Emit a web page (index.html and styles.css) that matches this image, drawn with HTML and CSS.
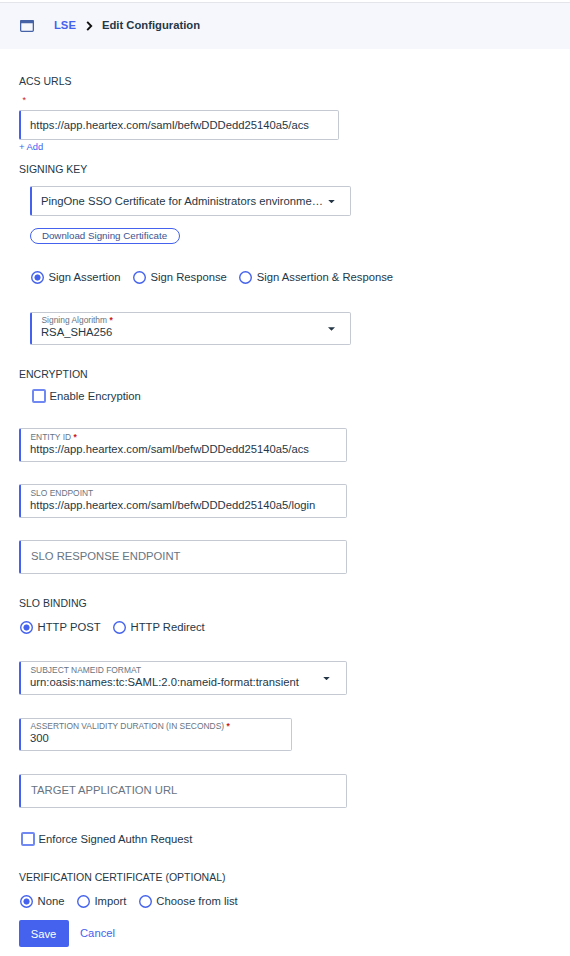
FILE: index.html
```html
<!DOCTYPE html>
<html lang="en">
<head>
<meta charset="utf-8">
<title>Edit Configuration</title>
<link rel="stylesheet" href="styles.css">
</head>
<body>
<header class="topbar">
  <svg class="app-icon" width="14" height="12" viewBox="0 0 14 12"><rect x=".65" y=".65" width="12.7" height="10.7" rx="1" fill="none" stroke="#4462a5" stroke-width="1.3"/><path d="M0 1.2Q0 0 1.2 0H12.8Q14 0 14 1.2V3.2H0Z" fill="#4462a5"/></svg>
  <a class="crumb-link">LSE</a>
  <svg class="chevron" width="7" height="10" viewBox="0 0 7 10"><path d="M1.2 .9L5.2 5L1.2 9.1" fill="none" stroke="#111" stroke-width="1.9"/></svg>
  <span class="crumb">Edit Configuration</span>
</header>
<main class="form">
  <h2 class="heading">ACS URLS</h2>
  <div class="required-mark">*</div>
  <div class="field field-url"><span class="value">https://app.heartex.com/saml/befwDDDedd25140a5/acs</span></div>
  <a class="add-link">+ Add</a>

  <h2 class="heading heading-key">SIGNING KEY</h2>
  <section class="indent">
    <div class="field field-select field-key"><span class="value">PingOne SSO Certificate for Administrators environme…</span><i class="caret"></i></div>
    <button class="download">Download Signing Certificate</button>
    <div class="radios radios-sign">
      <label class="option"><i class="radio on"></i><span>Sign Assertion</span></label>
      <label class="option"><i class="radio"></i><span>Sign Response</span></label>
      <label class="option"><i class="radio"></i><span>Sign Assertion &amp; Response</span></label>
    </div>
    <div class="field field-select field-algorithm"><div class="stack"><span class="label">Signing Algorithm <b>*</b></span><span class="value">RSA_SHA256</span></div><i class="caret"></i></div>
  </section>

  <h2 class="heading heading-encryption">ENCRYPTION</h2>
  <label class="check-row check-encryption"><i class="checkbox"></i>Enable Encryption</label>

  <div class="field field-entity"><div class="stack"><span class="label">ENTITY ID <b>*</b></span><span class="value">https://app.heartex.com/saml/befwDDDedd25140a5/acs</span></div></div>
  <div class="field"><div class="stack"><span class="label">SLO ENDPOINT</span><span class="value">https://app.heartex.com/saml/befwDDDedd25140a5/login</span></div></div>
  <div class="field"><span class="placeholder">SLO RESPONSE ENDPOINT</span></div>

  <h2 class="heading heading-binding">SLO BINDING</h2>
  <div class="radios">
    <label class="option"><i class="radio on"></i><span>HTTP POST</span></label>
    <label class="option"><i class="radio"></i><span>HTTP Redirect</span></label>
  </div>

  <div class="field field-select field-nameid"><div class="stack"><span class="label">SUBJECT NAMEID FORMAT</span><span class="value">urn:oasis:names:tc:SAML:2.0:nameid-format:transient</span></div><i class="caret"></i></div>
  <div class="field field-duration"><div class="stack"><span class="label">ASSERTION VALIDITY DURATION (IN SECONDS) <b>*</b></span><span class="value">300</span></div></div>
  <div class="field field-target"><span class="placeholder">TARGET APPLICATION URL</span></div>
  <label class="check-row check-authn"><i class="checkbox"></i>Enforce Signed Authn Request</label>

  <h2 class="heading heading-verify">VERIFICATION CERTIFICATE (OPTIONAL)</h2>
  <div class="radios">
    <label class="option"><i class="radio on"></i><span>None</span></label>
    <label class="option"><i class="radio"></i><span>Import</span></label>
    <label class="option"><i class="radio"></i><span>Choose from list</span></label>
  </div>
  <div class="actions"><button class="save">Save</button><a class="cancel">Cancel</a></div>
</main>
</body>
</html>
```
FILE: styles.css
```css
* { box-sizing: border-box; }
body {
  margin: 0;
  background: #fff;
  color: #253746;
  font: 11.25px/14px "Liberation Sans", Arial, sans-serif;
}
.topbar {
  display: flex;
  align-items: center;
  height: 47px;
  margin-top: 2px;
  padding: 0 0 2px 20px;
  border-top: 1px solid #e3e5ea;
  background: #f6f7fd;
  font-weight: 700;
}
.app-icon { margin: 2px 20px 0 0; }
.crumb-link { color: #4462ed; }
.chevron { margin: 1px 9px 0 10px; }
.form { padding: 25px 0 0 19px; }
.heading { margin: 0; height: 14px; font-size: 10.5px; font-weight: 400; }
.required-mark { height: 22px; padding: 6px 0 0 3.5px; color: #c81818; font-size: 9px; line-height: 12px; }
.field {
  display: flex;
  align-items: center;
  width: 328px;
  height: 34px;
  margin-bottom: 22px;
  padding: 0 15px 0 9px;
  border: 1px solid #c5c9d1;
  border-left: 2px solid #4462ed;
  border-radius: 2px;
  white-space: nowrap;
}
.field-select { justify-content: space-between; }
.stack { display: flex; flex-direction: column; margin-top: -3px; }
.label { height: 10px; padding-left: .5px; font-size: 8.44px; line-height: 10px; color: #68747f; }
.label b { color: #c81818; font-weight: 700; }
.value { height: 14px; }
.placeholder { padding: 0 0 2px 1px; color: #68747f; }
.field-url { width: 320px; height: 30px; margin-bottom: 0; }
.add-link { display: block; height: 14px; color: #4462ed; font-size: 9.4px; }
.heading-key { margin-top: 8px; }
.indent { padding: 10px 0 0 11px; }
.indent .field { width: 321px; margin-bottom: 0; }
.indent .field-key { height: 30px; }
.indent .field-algorithm { height: 33px; }
.caret { width: 7px; height: 3.5px; margin-top: 1px; background: #253746; clip-path: polygon(0 0, 100% 0, 50% 100%); }
.download {
  display: block;
  width: 150px;
  height: 16px;
  margin-top: 12px;
  padding: 0 1px 1px 0;
  border: 1px solid #4462ed;
  border-radius: 8px;
  background: #fff;
  color: #3b5391;
  font: 9.75px/13px "Liberation Sans", Arial, sans-serif;
}
.radios { display: flex; gap: 12.4px; padding: 10px 0 0 1px; }
.radios-sign { padding: 26px 0 27px 1px; }
.option { display: flex; align-items: center; gap: 4.6px; height: 15px; white-space: nowrap; }
.option span { padding-bottom: 1px; }
.radio { width: 13px; height: 13px; border-radius: 50%; box-shadow: inset 0 0 0 1.4px #4462ed; }
.radio.on { background: radial-gradient(circle, #4462ed 2.7px, transparent 3.4px); }
.heading-encryption { margin-top: 22px; }
.check-row { display: flex; align-items: center; gap: 3.5px; height: 14px; }
.checkbox { width: 14px; height: 14px; border: 2px solid #7088f2; border-radius: 2px; }
.check-encryption { margin: 8px 0 25px 13px; }
.heading-binding { margin-top: 22px; }
.field-nameid { margin-top: 26px; margin-bottom: 23px; }
.field-nameid .caret { margin-right: 1px; }
.field-duration { width: 273px; height: 33px; margin-bottom: 23px; }
.field-target { margin-bottom: 24px; }
.check-authn { margin-left: 2px; }
.heading-verify { margin-top: 24px; }
.actions { display: flex; gap: 11px; margin-top: 11px; }
.save {
  width: 50px;
  height: 27px;
  padding: 1px 1px 0 0;
  border: 0;
  border-radius: 2px;
  background: #4462ed;
  color: #fff;
  font: 11.25px/14px "Liberation Sans", Arial, sans-serif;
}
.cancel { padding-top: 6px; color: #4462ed; }
```
